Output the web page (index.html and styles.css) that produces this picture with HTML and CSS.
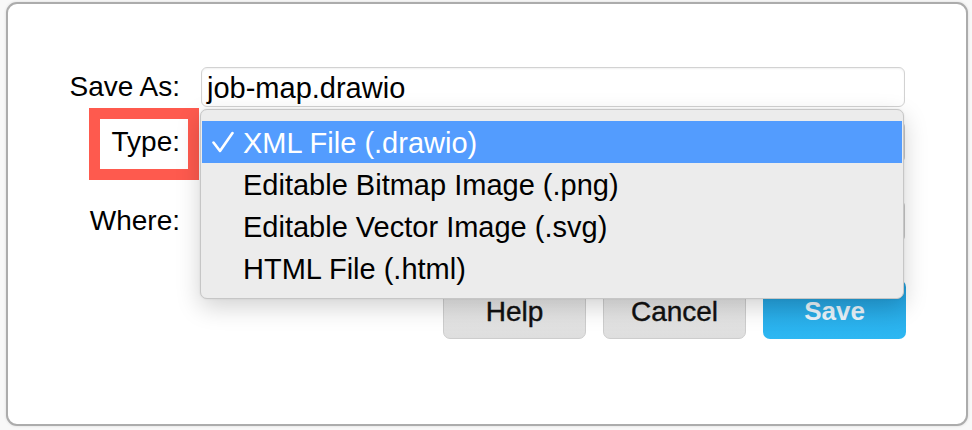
FILE: index.html
```html
<!DOCTYPE html>
<html>
<head>
<meta charset="utf-8">
<link rel="stylesheet" href="styles.css">
</head>
<body>
<div class="dialog">
  <div class="form">
    <div class="label">Save As:</div>
    <div class="field"><span class="field-text">job-map.drawio</span></div>
    <div class="label type-label">Type:</div>
    <div class="select"></div>
    <div class="label where-label">Where:</div>
    <div class="select where-select"></div>
  </div>
  <div class="buttons">
    <div class="btn">Help</div>
    <div class="btn">Cancel</div>
    <div class="btn primary">Save</div>
  </div>

  <div class="highlight-box"></div>

  <div class="menu">
    <div class="item selected">
      <svg class="check" width="22" height="22" viewBox="0 0 22 22"><polyline points="1.5,11.5 8,20 20.5,2" fill="none" stroke="#fff" stroke-width="2.6" stroke-linecap="round" stroke-linejoin="round"/></svg>
      <span>XML File (.drawio)</span>
    </div>
    <div class="item"><span>Editable Bitmap Image (.png)</span></div>
    <div class="item"><span>Editable Vector Image (.svg)</span></div>
    <div class="item"><span>HTML File (.html)</span></div>
  </div>
</div>
</body>
</html>
```

FILE: styles.css
```css
html, body {
  margin: 0;
  padding: 0;
  background: #f8f8f8;
}
body {
  font-family: "Liberation Sans", Arial, sans-serif;
  font-size: 28px;
  color: #000;
  width: 972px;
  height: 430px;
  overflow: hidden;
}
.dialog {
  position: relative;
  margin: 2px 4px 4px 6px;
  width: 958px;
  height: 420px;
  border: 2px solid #acacac;
  border-radius: 11px;
  background: #fff;
  box-shadow: 0 0 3px rgba(0,0,0,0.12);
}
.form {
  display: grid;
  grid-template-columns: 172px 704px;
  column-gap: 21px;
  padding-top: 63px;
  align-items: center;
}
.label {
  text-align: right;
  line-height: 40px;
}
.field {
  box-sizing: border-box;
  height: 40px;
  border: 1.5px solid #d2d2d2;
  border-radius: 6px;
  background: #fff;
  box-shadow: inset 0 1px 2px rgba(0,0,0,0.06);
  display: flex;
  align-items: center;
  padding-left: 5px;
  font-size: 29px;
}
.field-text {
  line-height: 1;
  position: relative;
  top: 1px;
}
.type-label, .select {
  margin-top: 14px;
}
.type-label {
  line-height: 42px;
}
.select {
  box-sizing: border-box;
  height: 42px;
  border-radius: 6px;
  background: #e4e4e4;
  border: 1px solid #c9c9c9;
  margin-left: 1px;
}
.where-label, .where-select {
  margin-top: 37px;
}
.where-label {
  line-height: 42px;
}
.buttons {
  display: flex;
  justify-content: flex-end;
  gap: 17px;
  padding-right: 60px;
  margin-top: 38px;
}
.btn {
  box-sizing: border-box;
  width: 143px;
  height: 59px;
  border: 1px solid #cdcdcd;
  border-radius: 7px;
  background: linear-gradient(#ececec, #dedede);
  display: flex;
  align-items: center;
  justify-content: center;
  padding-top: 4px;
  font-size: 28px;
  color: #111;
  -webkit-text-stroke: 0.4px #111;
}
.btn.primary {
  border: none;
  background: linear-gradient(#229cd8, #2db8f3);
  color: #e9f4fb;
  -webkit-text-stroke: 0;
  font-weight: bold;
  font-size: 26px;
}
.highlight-box {
  position: absolute;
  left: 81px;
  top: 104px;
  width: 88px;
  height: 50px;
  border: 11px solid #fe5a4e;
}
.menu {
  position: absolute;
  left: 192px;
  top: 105px;
  width: 704px;
  box-sizing: border-box;
  padding: 11px 1px 9px;
  background: #ececec;
  border: 1px solid #c6c6c6;
  border-radius: 7px;
  box-shadow: 0 8px 24px rgba(0,0,0,0.18), 0 0 2px rgba(0,0,0,0.1);
  font-size: 29px;
}
.item {
  height: 42px;
  display: flex;
  align-items: center;
  padding-left: 41px;
  position: relative;
  color: #000;
}
.item span {
  position: relative;
  top: 1px;
}
.item.selected {
  background: #539cfe;
  color: #fff;
}
.check {
  position: absolute;
  left: 10px;
  top: 10px;
}
```
